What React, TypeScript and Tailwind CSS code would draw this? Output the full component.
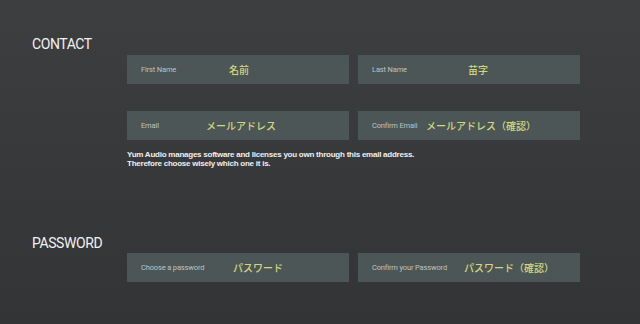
import React from "react";

type Field = {
  label: string;
  value: string;
  labelBox: string; // width of the label column, sets where the value starts
};

const contactRows: Field[][] = [
  [
    { label: "First Name", value: "名前", labelBox: "w-[88px]" },
    { label: "Last Name", value: "苗字", labelBox: "w-[96px]" },
  ],
  [
    { label: "Email", value: "メールアドレス", labelBox: "w-[65px]" },
    { label: "Confirm Email", value: "メールアドレス（確認）", labelBox: "w-[54px]" },
  ],
];

const passwordRow: Field[] = [
  { label: "Choose a password", value: "パスワード", labelBox: "w-[92px]" },
  { label: "Confirm your Password", value: "パスワード（確認）", labelBox: "w-[92px]" },
];

function InputField({ field }: { field: Field }) {
  return (
    <div className="flex h-[29px] items-center bg-[#4c5656] pl-[14px]">
      <span
        className={`${field.labelBox} shrink-0 whitespace-nowrap text-[7.5px] tracking-[-0.02em] text-[#bcc3c2] [font-family:Roboto,'Liberation_Sans',sans-serif]`}
      >
        {field.label}
      </span>
      <span className="whitespace-nowrap text-[10px] font-medium leading-none text-[#d6d47c] [font-family:'Noto_Sans_CJK_JP',sans-serif]">
        {field.value}
      </span>
    </div>
  );
}

function Heading({ children }: { children: React.ReactNode }) {
  return (
    <h2 className="ml-[32px] text-[14px] leading-[16px] tracking-[-0.03em] text-[#f2f2f2] [font-family:Roboto,'Liberation_Sans',sans-serif]">
      {children}
    </h2>
  );
}

export default function App() {
  return (
    <div className="min-h-screen w-full bg-gradient-to-b from-[#3d3e40] to-[#333436] pt-[36px]">
      {/* CONTACT */}
      <section>
        <Heading>CONTACT</Heading>
        <div className="ml-[127px] mt-[3px] flex flex-col gap-[27px]">
          {contactRows.map((row, i) => (
            <div key={i} className="grid grid-cols-[222px_222px] gap-x-[9px]">
              {row.map((f) => (
                <InputField key={f.label} field={f} />
              ))}
            </div>
          ))}
        </div>
        <p className="ml-[127px] mt-[10px] text-[8px] font-bold leading-[9px] tracking-[-0.03em] text-[#f0f0f0] [font-family:'Liberation_Sans',Arial,sans-serif]">
          Yum Audio manages software and licenses you own through this email address.
          <br />
          Therefore choose wisely which one it is.
        </p>
      </section>

      {/* PASSWORD */}
      <section className="mt-[67px]">
        <Heading>PASSWORD</Heading>
        <div className="ml-[127px] mt-[2px] grid grid-cols-[222px_222px] gap-x-[9px]">
          {passwordRow.map((f) => (
            <InputField key={f.label} field={f} />
          ))}
        </div>
      </section>
    </div>
  );
}
